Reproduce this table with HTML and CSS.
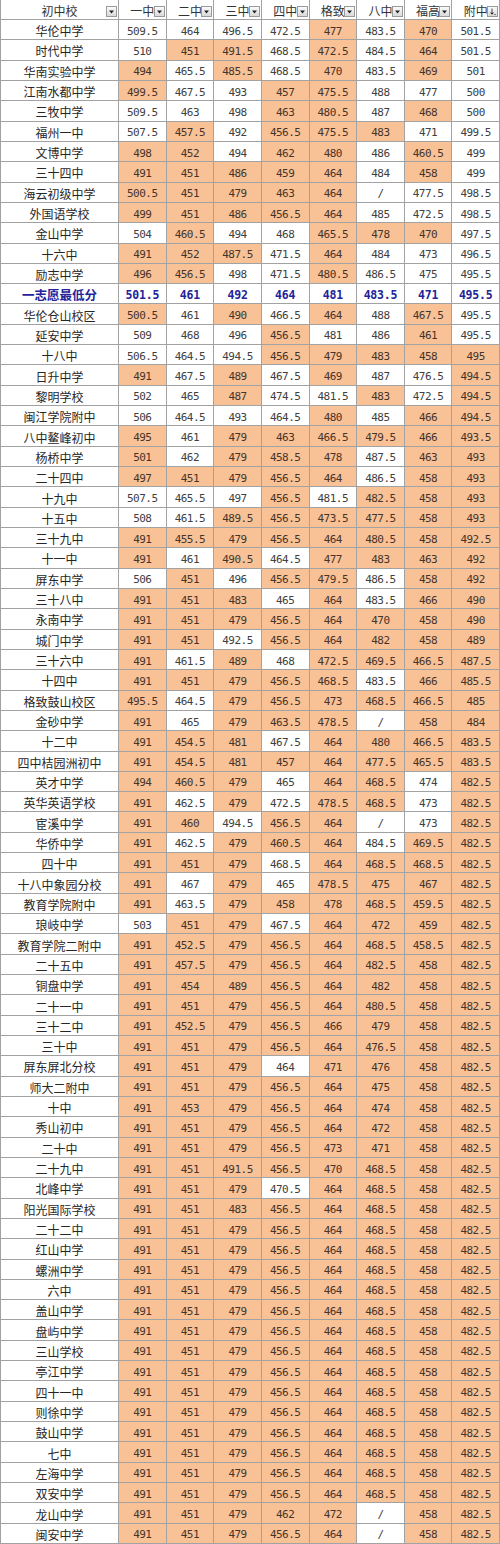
FILE: index.html
```html
<!DOCTYPE html>
<html lang="zh">
<head>
<meta charset="utf-8">
<title>初中校 录取分数</title>
<link rel="stylesheet" href="styles.css">
</head>
<body>
<div class="sheet">
<div class="h">初中校<span class="dd"><svg viewBox="0 0 9 9"><polygon points="2,3.5 7,3.5 4.5,6.5"/></svg></span></div>
<div class="h">一中<span class="dd"><svg viewBox="0 0 9 9"><polygon points="2,3.5 7,3.5 4.5,6.5"/></svg></span></div>
<div class="h">二中<span class="dd"><svg viewBox="0 0 9 9"><polygon points="2,3.5 7,3.5 4.5,6.5"/></svg></span></div>
<div class="h">三中<span class="dd"><svg viewBox="0 0 9 9"><polygon points="2,3.5 7,3.5 4.5,6.5"/></svg></span></div>
<div class="h">四中<span class="dd"><svg viewBox="0 0 9 9"><polygon points="2,3.5 7,3.5 4.5,6.5"/></svg></span></div>
<div class="h">格致<span class="dd"><svg viewBox="0 0 9 9"><polygon points="2,3.5 7,3.5 4.5,6.5"/></svg></span></div>
<div class="h">八中<span class="dd"><svg viewBox="0 0 9 9"><polygon points="2,3.5 7,3.5 4.5,6.5"/></svg></span></div>
<div class="h">福高<span class="dd"><svg viewBox="0 0 9 9"><polygon points="2,3.5 7,3.5 4.5,6.5"/></svg></span></div>
<div class="h">附中<span class="dd"><svg viewBox="0 0 9 9"><path d="M2 5.5 L4 7.8 L6 5.5 Z M3.6 1.5 H4.4 V6 H3.6 Z M6 7.4 H8 V8 H6 Z"/></svg></span></div>

<div class="n">华伦中学</div><div class="w">509.5</div><div class="w">464</div><div class="w">496.5</div><div class="w">472.5</div><div class="o">477</div><div class="w">483.5</div><div class="o">470</div><div class="w">501.5</div>
<div class="n">时代中学</div><div class="w">510</div><div class="o">451</div><div class="o">491.5</div><div class="w">468.5</div><div class="o">472.5</div><div class="w">484.5</div><div class="o">464</div><div class="w">501.5</div>
<div class="n">华南实验中学</div><div class="o">494</div><div class="w">465.5</div><div class="o">485.5</div><div class="w">468.5</div><div class="o">470</div><div class="w">483.5</div><div class="o">469</div><div class="w">501</div>
<div class="n">江南水都中学</div><div class="o">499.5</div><div class="w">467.5</div><div class="w">493</div><div class="o">457</div><div class="o">475.5</div><div class="w">488</div><div class="w">477</div><div class="w">500</div>
<div class="n">三牧中学</div><div class="w">509.5</div><div class="w">463</div><div class="w">498</div><div class="o">463</div><div class="o">480.5</div><div class="w">487</div><div class="o">468</div><div class="w">500</div>
<div class="n">福州一中</div><div class="w">507.5</div><div class="o">457.5</div><div class="w">492</div><div class="o">456.5</div><div class="o">475.5</div><div class="o">483</div><div class="w">471</div><div class="w">499.5</div>
<div class="n">文博中学</div><div class="o">498</div><div class="o">452</div><div class="w">494</div><div class="o">462</div><div class="o">480</div><div class="w">486</div><div class="o">460.5</div><div class="w">499</div>
<div class="n">三十四中</div><div class="o">491</div><div class="o">451</div><div class="o">486</div><div class="o">459</div><div class="o">464</div><div class="w">484</div><div class="o">458</div><div class="w">499</div>
<div class="n">海云初级中学</div><div class="o">500.5</div><div class="o">451</div><div class="o">479</div><div class="o">463</div><div class="o">464</div><div class="w">/</div><div class="w">477.5</div><div class="w">498.5</div>
<div class="n">外国语学校</div><div class="o">499</div><div class="o">451</div><div class="o">486</div><div class="o">456.5</div><div class="o">464</div><div class="w">485</div><div class="w">472.5</div><div class="w">498.5</div>
<div class="n">金山中学</div><div class="w">504</div><div class="o">460.5</div><div class="w">494</div><div class="w">468</div><div class="o">465.5</div><div class="o">478</div><div class="o">470</div><div class="w">497.5</div>
<div class="n">十六中</div><div class="o">491</div><div class="o">452</div><div class="o">487.5</div><div class="w">471.5</div><div class="o">464</div><div class="w">484</div><div class="w">473</div><div class="w">496.5</div>
<div class="n">励志中学</div><div class="o">496</div><div class="o">456.5</div><div class="w">498</div><div class="w">471.5</div><div class="o">480.5</div><div class="w">486.5</div><div class="w">475</div><div class="w">495.5</div>
<div class="n b">一志愿最低分</div><div class="w b">501.5</div><div class="w b">461</div><div class="w b">492</div><div class="w b">464</div><div class="w b">481</div><div class="w b">483.5</div><div class="w b">471</div><div class="w b">495.5</div>
<div class="n">华伦仓山校区</div><div class="o">500.5</div><div class="w">461</div><div class="o">490</div><div class="w">466.5</div><div class="o">464</div><div class="w">488</div><div class="o">467.5</div><div class="w">495.5</div>
<div class="n">延安中学</div><div class="w">509</div><div class="w">468</div><div class="w">496</div><div class="o">456.5</div><div class="w">481</div><div class="w">486</div><div class="o">461</div><div class="w">495.5</div>
<div class="n">十八中</div><div class="w">506.5</div><div class="w">464.5</div><div class="w">494.5</div><div class="o">456.5</div><div class="o">479</div><div class="o">483</div><div class="o">458</div><div class="o">495</div>
<div class="n">日升中学</div><div class="o">491</div><div class="w">467.5</div><div class="o">489</div><div class="w">467.5</div><div class="o">469</div><div class="w">487</div><div class="w">476.5</div><div class="o">494.5</div>
<div class="n">黎明学校</div><div class="w">502</div><div class="w">465</div><div class="o">487</div><div class="w">474.5</div><div class="w">481.5</div><div class="o">483</div><div class="w">472.5</div><div class="o">494.5</div>
<div class="n">闽江学院附中</div><div class="w">506</div><div class="w">464.5</div><div class="w">493</div><div class="w">464.5</div><div class="o">480</div><div class="w">485</div><div class="o">466</div><div class="o">494.5</div>
<div class="n">八中鳌峰初中</div><div class="o">495</div><div class="w">461</div><div class="o">479</div><div class="o">463</div><div class="o">466.5</div><div class="o">479.5</div><div class="o">466</div><div class="o">493.5</div>
<div class="n">杨桥中学</div><div class="o">501</div><div class="w">462</div><div class="o">479</div><div class="o">458.5</div><div class="o">478</div><div class="w">487.5</div><div class="o">463</div><div class="o">493</div>
<div class="n">二十四中</div><div class="o">497</div><div class="o">451</div><div class="o">479</div><div class="o">456.5</div><div class="o">464</div><div class="w">486.5</div><div class="o">458</div><div class="o">493</div>
<div class="n">十九中</div><div class="w">507.5</div><div class="w">465.5</div><div class="w">497</div><div class="o">456.5</div><div class="w">481.5</div><div class="o">482.5</div><div class="o">458</div><div class="o">493</div>
<div class="n">十五中</div><div class="w">508</div><div class="w">461.5</div><div class="o">489.5</div><div class="o">456.5</div><div class="o">473.5</div><div class="o">477.5</div><div class="o">458</div><div class="o">493</div>
<div class="n">三十九中</div><div class="o">491</div><div class="o">455.5</div><div class="o">479</div><div class="o">456.5</div><div class="o">464</div><div class="o">480.5</div><div class="o">458</div><div class="o">492.5</div>
<div class="n">十一中</div><div class="o">491</div><div class="w">461</div><div class="o">490.5</div><div class="w">464.5</div><div class="o">477</div><div class="o">483</div><div class="o">463</div><div class="o">492</div>
<div class="n">屏东中学</div><div class="w">506</div><div class="o">451</div><div class="w">496</div><div class="o">456.5</div><div class="o">479.5</div><div class="w">486.5</div><div class="o">458</div><div class="o">492</div>
<div class="n">三十八中</div><div class="o">491</div><div class="o">451</div><div class="o">483</div><div class="w">465</div><div class="o">464</div><div class="w">483.5</div><div class="o">466</div><div class="o">490</div>
<div class="n">永南中学</div><div class="o">491</div><div class="o">451</div><div class="o">479</div><div class="o">456.5</div><div class="o">464</div><div class="o">470</div><div class="o">458</div><div class="o">490</div>
<div class="n">城门中学</div><div class="o">491</div><div class="o">451</div><div class="w">492.5</div><div class="o">456.5</div><div class="o">464</div><div class="o">482</div><div class="o">458</div><div class="o">489</div>
<div class="n">三十六中</div><div class="o">491</div><div class="w">461.5</div><div class="o">489</div><div class="w">468</div><div class="o">472.5</div><div class="o">469.5</div><div class="o">466.5</div><div class="o">487.5</div>
<div class="n">十四中</div><div class="o">491</div><div class="o">451</div><div class="o">479</div><div class="o">456.5</div><div class="o">468.5</div><div class="w">483.5</div><div class="o">466</div><div class="o">485.5</div>
<div class="n">格致鼓山校区</div><div class="o">495.5</div><div class="w">464.5</div><div class="o">479</div><div class="o">456.5</div><div class="o">473</div><div class="o">468.5</div><div class="o">466.5</div><div class="o">485</div>
<div class="n">金砂中学</div><div class="o">491</div><div class="w">465</div><div class="o">479</div><div class="o">463.5</div><div class="o">478.5</div><div class="w">/</div><div class="o">458</div><div class="o">484</div>
<div class="n">十二中</div><div class="o">491</div><div class="o">454.5</div><div class="o">481</div><div class="w">467.5</div><div class="o">464</div><div class="o">480</div><div class="o">466.5</div><div class="o">483.5</div>
<div class="n">四中桔园洲初中</div><div class="o">491</div><div class="o">454.5</div><div class="o">481</div><div class="o">457</div><div class="o">464</div><div class="o">477.5</div><div class="o">465.5</div><div class="o">483.5</div>
<div class="n">英才中学</div><div class="o">494</div><div class="o">460.5</div><div class="o">479</div><div class="w">465</div><div class="o">464</div><div class="o">468.5</div><div class="w">474</div><div class="o">482.5</div>
<div class="n">英华英语学校</div><div class="o">491</div><div class="w">462.5</div><div class="o">479</div><div class="w">472.5</div><div class="o">478.5</div><div class="o">468.5</div><div class="w">473</div><div class="o">482.5</div>
<div class="n">宦溪中学</div><div class="o">491</div><div class="o">460</div><div class="w">494.5</div><div class="o">456.5</div><div class="o">464</div><div class="w">/</div><div class="w">473</div><div class="o">482.5</div>
<div class="n">华侨中学</div><div class="o">491</div><div class="w">462.5</div><div class="o">479</div><div class="o">460.5</div><div class="o">464</div><div class="w">484.5</div><div class="o">469.5</div><div class="o">482.5</div>
<div class="n">四十中</div><div class="o">491</div><div class="o">451</div><div class="o">479</div><div class="w">468.5</div><div class="o">464</div><div class="o">468.5</div><div class="o">468.5</div><div class="o">482.5</div>
<div class="n">十八中象园分校</div><div class="o">491</div><div class="w">467</div><div class="o">479</div><div class="w">465</div><div class="o">478.5</div><div class="o">475</div><div class="o">467</div><div class="o">482.5</div>
<div class="n">教育学院附中</div><div class="o">491</div><div class="w">463.5</div><div class="o">479</div><div class="o">458</div><div class="o">478</div><div class="o">468.5</div><div class="o">459.5</div><div class="o">482.5</div>
<div class="n">琅岐中学</div><div class="w">503</div><div class="o">451</div><div class="o">479</div><div class="w">467.5</div><div class="o">464</div><div class="o">472</div><div class="o">459</div><div class="o">482.5</div>
<div class="n">教育学院二附中</div><div class="o">491</div><div class="o">452.5</div><div class="o">479</div><div class="o">456.5</div><div class="o">464</div><div class="o">468.5</div><div class="o">458.5</div><div class="o">482.5</div>
<div class="n">二十五中</div><div class="o">491</div><div class="o">457.5</div><div class="o">479</div><div class="o">456.5</div><div class="o">464</div><div class="o">482.5</div><div class="o">458</div><div class="o">482.5</div>
<div class="n">铜盘中学</div><div class="o">491</div><div class="o">454</div><div class="o">489</div><div class="o">456.5</div><div class="o">464</div><div class="o">482</div><div class="o">458</div><div class="o">482.5</div>
<div class="n">二十一中</div><div class="o">491</div><div class="o">451</div><div class="o">479</div><div class="o">456.5</div><div class="o">464</div><div class="o">480.5</div><div class="o">458</div><div class="o">482.5</div>
<div class="n">三十二中</div><div class="o">491</div><div class="o">452.5</div><div class="o">479</div><div class="o">456.5</div><div class="o">466</div><div class="o">479</div><div class="o">458</div><div class="o">482.5</div>
<div class="n">三十中</div><div class="o">491</div><div class="o">451</div><div class="o">479</div><div class="o">456.5</div><div class="o">464</div><div class="o">476.5</div><div class="o">458</div><div class="o">482.5</div>
<div class="n">屏东屏北分校</div><div class="o">491</div><div class="o">451</div><div class="o">479</div><div class="w">464</div><div class="o">471</div><div class="o">476</div><div class="o">458</div><div class="o">482.5</div>
<div class="n">师大二附中</div><div class="o">491</div><div class="o">451</div><div class="o">479</div><div class="o">456.5</div><div class="o">464</div><div class="o">475</div><div class="o">458</div><div class="o">482.5</div>
<div class="n">十中</div><div class="o">491</div><div class="o">453</div><div class="o">479</div><div class="o">456.5</div><div class="o">464</div><div class="o">474</div><div class="o">458</div><div class="o">482.5</div>
<div class="n">秀山初中</div><div class="o">491</div><div class="o">451</div><div class="o">479</div><div class="o">456.5</div><div class="o">464</div><div class="o">472</div><div class="o">458</div><div class="o">482.5</div>
<div class="n">二十中</div><div class="o">491</div><div class="o">451</div><div class="o">479</div><div class="o">456.5</div><div class="o">473</div><div class="o">471</div><div class="o">458</div><div class="o">482.5</div>
<div class="n">二十九中</div><div class="o">491</div><div class="o">451</div><div class="o">491.5</div><div class="o">456.5</div><div class="o">470</div><div class="o">468.5</div><div class="o">458</div><div class="o">482.5</div>
<div class="n">北峰中学</div><div class="o">491</div><div class="o">451</div><div class="o">479</div><div class="w">470.5</div><div class="o">464</div><div class="o">468.5</div><div class="o">458</div><div class="o">482.5</div>
<div class="n">阳光国际学校</div><div class="o">491</div><div class="o">451</div><div class="o">483</div><div class="o">456.5</div><div class="o">464</div><div class="o">468.5</div><div class="o">458</div><div class="o">482.5</div>
<div class="n">二十二中</div><div class="o">491</div><div class="o">451</div><div class="o">479</div><div class="o">456.5</div><div class="o">464</div><div class="o">468.5</div><div class="o">458</div><div class="o">482.5</div>
<div class="n">红山中学</div><div class="o">491</div><div class="o">451</div><div class="o">479</div><div class="o">456.5</div><div class="o">464</div><div class="o">468.5</div><div class="o">458</div><div class="o">482.5</div>
<div class="n">螺洲中学</div><div class="o">491</div><div class="o">451</div><div class="o">479</div><div class="o">456.5</div><div class="o">464</div><div class="o">468.5</div><div class="o">458</div><div class="o">482.5</div>
<div class="n">六中</div><div class="o">491</div><div class="o">451</div><div class="o">479</div><div class="o">456.5</div><div class="o">464</div><div class="o">468.5</div><div class="o">458</div><div class="o">482.5</div>
<div class="n">盖山中学</div><div class="o">491</div><div class="o">451</div><div class="o">479</div><div class="o">456.5</div><div class="o">464</div><div class="o">468.5</div><div class="o">458</div><div class="o">482.5</div>
<div class="n">盘屿中学</div><div class="o">491</div><div class="o">451</div><div class="o">479</div><div class="o">456.5</div><div class="o">464</div><div class="o">468.5</div><div class="o">458</div><div class="o">482.5</div>
<div class="n">三山学校</div><div class="o">491</div><div class="o">451</div><div class="o">479</div><div class="o">456.5</div><div class="o">464</div><div class="o">468.5</div><div class="o">458</div><div class="o">482.5</div>
<div class="n">亭江中学</div><div class="o">491</div><div class="o">451</div><div class="o">479</div><div class="o">456.5</div><div class="o">464</div><div class="o">468.5</div><div class="o">458</div><div class="o">482.5</div>
<div class="n">四十一中</div><div class="o">491</div><div class="o">451</div><div class="o">479</div><div class="o">456.5</div><div class="o">464</div><div class="o">468.5</div><div class="o">458</div><div class="o">482.5</div>
<div class="n">则徐中学</div><div class="o">491</div><div class="o">451</div><div class="o">479</div><div class="o">456.5</div><div class="o">464</div><div class="o">468.5</div><div class="o">458</div><div class="o">482.5</div>
<div class="n">鼓山中学</div><div class="o">491</div><div class="o">451</div><div class="o">479</div><div class="o">456.5</div><div class="o">464</div><div class="o">468.5</div><div class="o">458</div><div class="o">482.5</div>
<div class="n">七中</div><div class="o">491</div><div class="o">451</div><div class="o">479</div><div class="o">456.5</div><div class="o">464</div><div class="o">468.5</div><div class="o">458</div><div class="o">482.5</div>
<div class="n">左海中学</div><div class="o">491</div><div class="o">451</div><div class="o">479</div><div class="o">456.5</div><div class="o">464</div><div class="o">468.5</div><div class="o">458</div><div class="o">482.5</div>
<div class="n">双安中学</div><div class="o">491</div><div class="o">451</div><div class="o">479</div><div class="o">456.5</div><div class="o">464</div><div class="o">468.5</div><div class="o">458</div><div class="o">482.5</div>
<div class="n">龙山中学</div><div class="o">491</div><div class="o">451</div><div class="o">479</div><div class="o">462</div><div class="o">472</div><div class="w">/</div><div class="o">458</div><div class="o">482.5</div>
<div class="n">闽安中学</div><div class="o">491</div><div class="o">451</div><div class="o">479</div><div class="o">456.5</div><div class="o">464</div><div class="w">/</div><div class="o">458</div><div class="o">482.5</div>
</div>
</body>
</html>
```
FILE: styles.css
```css
html, body {
  margin: 0;
  padding: 0;
  background: #ffffff;
}

.sheet {
  width: 500px;
  height: 1544px;
  box-sizing: border-box;
  display: grid;
  grid-template-columns: 117px repeat(8, 1fr);
  grid-template-rows: 19px repeat(75, 1fr);
  gap: 1px;
  padding: 0 1px 1px 1px;
  background: #a2a2a2;
  font-family: "Noto Sans CJK SC", "Noto Sans", sans-serif;
  color: #2a2a2a;
}

.sheet > div {
  display: flex;
  align-items: center;
  justify-content: center;
  overflow: hidden;
  white-space: nowrap;
  padding-top: 3px;
  box-sizing: border-box;
}

.h {
  position: relative;
  background: #ffffff;
  font-size: 12px;
  line-height: 14px;
  color: #333333;
}

.dd {
  position: absolute;
  right: 1px;
  bottom: 2px;
  width: 11px;
  height: 11px;
  box-sizing: border-box;
  border: 1px solid #9a9a9a;
  background: linear-gradient(#fbfbfb, #d9d9d9);
  display: flex;
  align-items: center;
  justify-content: center;
}

.dd svg {
  width: 9px;
  height: 9px;
  fill: #222222;
}

.n {
  background: #ffffff;
  font-size: 12px;
  line-height: 14px;
  color: #262626;
}

.w,
.o {
  font-family: "DejaVu Sans Mono", "Liberation Mono", monospace;
  font-size: 11px;
  line-height: 13px;
  letter-spacing: -0.5px;
  color: #404040;
}

.w {
  background: #ffffff;
}

.o {
  background: #f9c196;
  color: #45342a;
}

.n.b {
  font-weight: 700;
  color: #23239a;
  font-size: 12.5px;
}

.w.b {
  font-weight: 700;
  color: #23239a;
  font-size: 11.5px;
  letter-spacing: -0.2px;
}
```
